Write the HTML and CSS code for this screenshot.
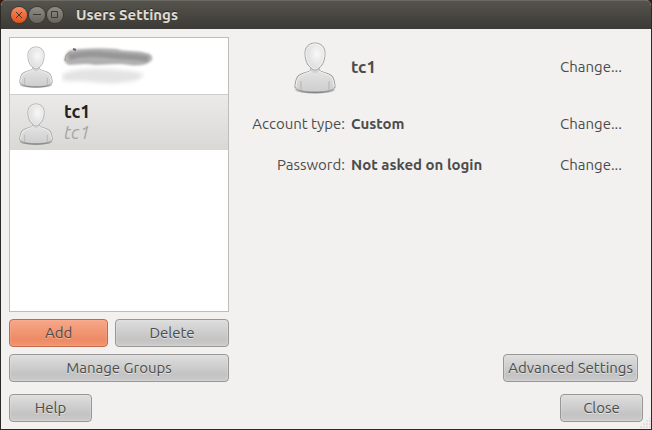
FILE: index.html
```html
<!DOCTYPE html>
<html lang="en">
<head>
  <meta charset="utf-8">
  <title>Users Settings</title>
  <link rel="stylesheet" href="styles.css">
</head>
<body>
  <!-- shared avatar drawing -->
  <svg class="defs" width="0" height="0" aria-hidden="true">
    <defs>
      <radialGradient id="headFill" cx="0.6" cy="0.4" r="0.6">
        <stop offset="0" stop-color="#f8f8f8"/>
        <stop offset="1" stop-color="#dcdcdc"/>
      </radialGradient>
      <linearGradient id="bodyFill" x1="0" y1="0" x2="0" y2="1">
        <stop offset="0" stop-color="#e9e9e9"/>
        <stop offset="0.5" stop-color="#dadada"/>
        <stop offset="1" stop-color="#cecece"/>
      </linearGradient>
      <radialGradient id="shadowFill">
        <stop offset="0.6" stop-color="#444" stop-opacity="0.8"/>
        <stop offset="1" stop-color="#444" stop-opacity="0"/>
      </radialGradient>
      <filter id="smudge" x="-10%" y="-50%" width="120%" height="200%">
        <feGaussianBlur stdDeviation="1.2"/>
      </filter>
      <filter id="smudgeSoft" x="-10%" y="-50%" width="120%" height="200%">
        <feGaussianBlur stdDeviation="2"/>
      </filter>
      <symbol id="avatar" viewBox="0 0 42 54">
        <ellipse cx="21" cy="48" rx="21" ry="4" fill="url(#shadowFill)"/>
        <path d="M17 25v3c-1 2-10 3-13 6-2 2-3 8-3 11 0 3 8 5 20 5s20-2 20-5c0-3-1-9-3-11-3-3-12-4-13-6v-3z" fill="url(#bodyFill)" stroke="#979797"/>
        <path d="M2 45c0-4 1-8 3-10 3-3 9-4 12-6 2 2 6 2 8 0 3 2 9 3 12 6 2 2 3 6 3 10" fill="none" stroke="#f1f1f1"/>
        <path d="M7 39v9M35 39v9" stroke="#b2b2b2" fill="none"/>
        <path d="M17 29c2 3 6 3 8 0v-3h-8z" fill="#d3d3d3"/>
        <path d="M21 1c6 0 10 4 10 10 0 5-1 9-3 12-2 2-4 5-7 5s-5-3-7-5c-2-3-3-7-3-12 0-6 4-10 10-10z" fill="url(#headFill)" stroke="#a3a3a3"/>
        <path d="M21 2c5 0 9 4 9 9 0 4-1 8-3 11-2 2-3 5-6 5s-4-3-6-5c-2-3-3-7-3-11 0-5 4-9 9-9z" fill="none" stroke="#f6f6f6" stroke-opacity="0.8"/>
      </symbol>
    </defs>
  </svg>

  <div class="window">
    <header class="titlebar">
      <div class="controls">
        <button class="control control-close" aria-label="Close window">
          <svg width="16" height="16" viewBox="0 0 16 16"><path d="M5 5l6 6M11 5l-6 6"/></svg>
        </button>
        <button class="control" aria-label="Minimize">
          <svg width="16" height="16" viewBox="0 0 16 16"><path d="M4 7.500h8"/></svg>
        </button>
        <button class="control" aria-label="Maximize">
          <svg width="16" height="16" viewBox="0 0 16 16"><path d="M4.500 4.500h6v6h-6z"/></svg>
        </button>
      </div>
      <h1 class="title">Users Settings</h1>
    </header>

    <main class="content">
      <section class="sidebar">
        <ul class="users">
          <li class="user">
            <svg class="user-face" width="34" height="44"><use href="#avatar"/></svg>
            <svg class="scribble" width="100" height="42" viewBox="0 0 100 42">
              <g filter="url(#smudge)">
                <path d="M6 8c3-4 8-3 13-4 12-1 25-1 37 0 9 3 20 1 29 4 7 1 8 6 4 9-6 4-14 4-21 3-12-2-22 0-34 0-10-2-18 0-26 0-6-2-5-8-2-12z" fill="#b0b0b0"/>
                <path d="M8 12c14-4 25-3 39-2 14 2 25 1 40 4" stroke="#979797" stroke-width="6" fill="none"/>
              </g>
              <path d="M4 16c0-5 2-8 6-9" stroke="#a3968a" stroke-width="1" fill="none"/>
              <path d="M12 4l3 1" stroke="#765a72" stroke-width="2"/>
              <path d="M2 29c14-6 28-5 41-5 13 1 27 1 40 5-5 9-18 7-27 9-15 1-25-2-40-2-9 0-19 1-14-7z" fill="#e3e3e3" filter="url(#smudgeSoft)"/>
            </svg>
          </li>
          <li class="user user-selected">
            <svg class="user-face" width="34" height="44"><use href="#avatar"/></svg>
            <div class="user-text">
              <strong class="user-name">tc1</strong>
              <em class="user-login">tc1</em>
            </div>
          </li>
        </ul>
        <div class="button-row">
          <button class="button button-focus">Add</button>
          <button class="button button-wide">Delete</button>
        </div>
        <button class="button">Manage Groups</button>
      </section>

      <section class="account">
        <div class="details">
          <svg class="face" width="42" height="54"><use href="#avatar"/></svg>
          <strong class="name">tc1</strong>
          <button class="change" aria-label="Change name">Change...</button>

          <span class="label">Account type:</span>
          <strong class="value">Custom</strong>
          <button class="change" aria-label="Change account type">Change...</button>

          <span class="label">Password:</span>
          <strong class="value">Not asked on login</strong>
          <button class="change" aria-label="Change password">Change...</button>
        </div>
        <button class="button button-advanced">Advanced Settings</button>
      </section>
    </main>

    <footer class="actions">
      <button class="button button-action">Help</button>
      <button class="button button-action">Close</button>
    </footer>
    <svg class="grip" width="11" height="11" viewBox="0 0 11 11" aria-hidden="true">
      <path d="M9 0h2M6 3h2M9 3h2M3 6h2M6 6h2M9 6h2M0 9h2M3 9h2M6 9h2M9 9h2"/>
    </svg>
  </div>
</body>
</html>
```
FILE: styles.css
```css
* {
  box-sizing: border-box;
}
body {
  margin: 0;
  background: #3c1a0c;
  color: #4c4c4c;
  font-family: Ubuntu, "Noto Sans", sans-serif;
  font-size: 15px;
  line-height: 20px;
}
button {
  font: inherit;
  color: inherit;
  white-space: nowrap;
}
svg {
  display: block;
}
.defs {
  position: absolute;
}
.window {
  position: relative;
  display: flex;
  flex-direction: column;
  min-height: 100vh;
  border: 1px solid #2b2928;
  border-top: 0;
  border-radius: 6px 6px 0 0;
  background: #f2f1f0;
  overflow: hidden;
}

/* title bar */
.titlebar {
  display: flex;
  align-items: center;
  gap: 13px;
  height: 29px;
  padding: 0 10px;
  border-top: 1px solid #6b6963;
  border-bottom: 1px solid #3c3b37;
  background: linear-gradient(#55534c, #3c3b37);
}
.controls {
  display: flex;
  gap: 2px;
}
.control {
  width: 16px;
  height: 16px;
  padding: 0;
  border: 0;
  border-radius: 50%;
  background: linear-gradient(#8f8d86, #66645d);
  box-shadow: 0 0 0 1px #3c3b36;
}
.control-close {
  background: linear-gradient(#f68a62, #e2521b);
}
.control path {
  fill: none;
  stroke: #3b3a35;
}
.title {
  margin: 0;
  color: #dfdbd2;
  font-size: 15px;
  font-weight: bold;
  text-shadow: 0 -1px #2a2926;
}

/* body */
.content {
  display: flex;
  flex: 1;
  gap: 24px;
  padding: 8px 8px 0;
}
.sidebar {
  display: flex;
  flex-direction: column;
  flex: 0 0 220px;
  gap: 7px;
}
.users {
  flex: 1;
  margin: 0;
  padding: 0;
  border: 1px solid #bfbdb9;
  background: #fff;
  list-style: none;
}
.user {
  display: flex;
  align-items: center;
  height: 56px;
  padding-left: 9px;
}
.user-face {
  margin-top: 4px;
}
.user-selected {
  border-top: 1px solid #cfcdca;
  background: linear-gradient(#ebeae9, #d9d8d5);
}
.user-text {
  padding: 0 0 2px 11px;
}
.user-name,
.user-login {
  display: block;
  font-size: 18px;
  line-height: 21px;
}
.user-name {
  color: #222;
}
.user-login {
  color: #a5a5a4;
}
.scribble {
  margin-left: 8px;
}

/* buttons */
.button {
  height: 28px;
  padding: 0 4px;
  border: 1px solid #989795;
  border-radius: 4px;
  background: linear-gradient(#dedede, #c3c3c3 75%, #cbcbcb);
  box-shadow: inset 0 0 2px #e8e8e8;
  text-shadow: 0 1px #e3e3e3;
}
.button-row {
  display: flex;
  gap: 7px;
}
.button-row .button {
  flex: 6;
}
.button-row .button-wide {
  flex: 7;
}
.button-focus {
  border-color: #c0694b;
  background: linear-gradient(#f8a789, #ed8b65 75%, #f09570);
  box-shadow: inset 0 0 2px #fbb79d;
  text-shadow: 0 1px #f8b297;
}
.button-action {
  min-width: 83px;
}

/* account */
.account {
  display: flex;
  flex-direction: column;
  flex: 1;
  justify-content: space-between;
  padding-right: 5px;
}
.details {
  display: grid;
  grid-template-columns: 92px 1fr auto;
  grid-template-rows: 60px 29px 29px;
  gap: 12px 6px;
  align-items: center;
}
.face,
.label {
  justify-self: end;
}
.face {
  margin-top: 4px;
  margin-right: 9px;
}
.label {
  white-space: nowrap;
}
.name {
  font-size: 17px;
}
.change {
  padding: 4px 16px;
  border: 0;
  background: none;
}
.button-advanced {
  align-self: flex-end;
}

/* footer */
.actions {
  display: flex;
  justify-content: space-between;
  padding: 12px 8px 7px;
}
.grip {
  position: absolute;
  right: 0;
  bottom: 0;
}
.grip path {
  stroke: #d0cecb;
}
```
